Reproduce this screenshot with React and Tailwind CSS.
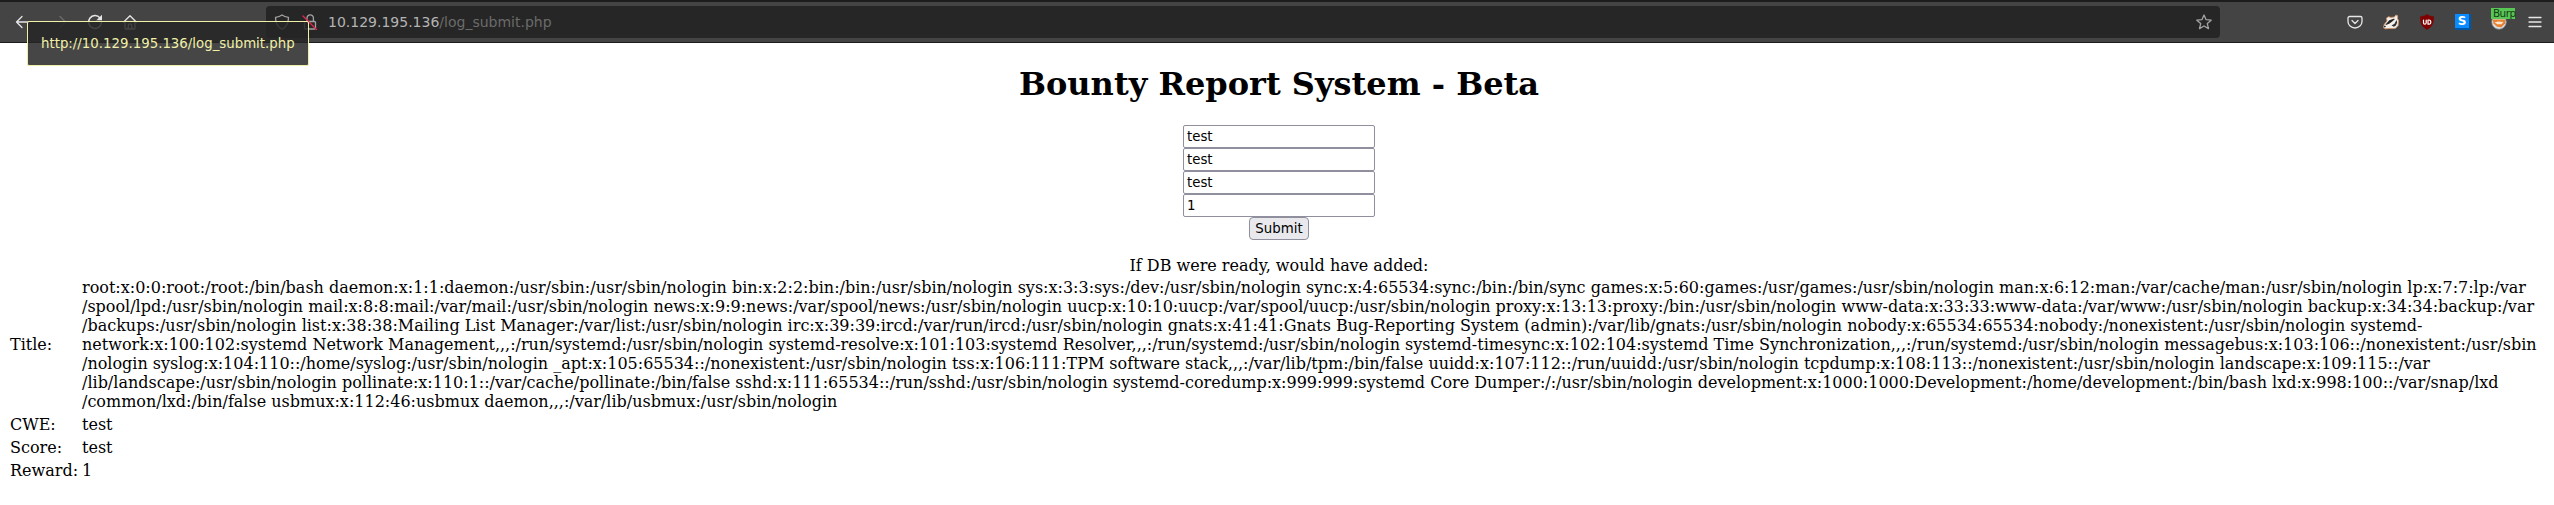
const lines = [
  'root:x:0:0:root:/root:/bin/bash daemon:x:1:1:daemon:/usr/sbin:/usr/sbin/nologin bin:x:2:2:bin:/bin:/usr/sbin/nologin sys:x:3:3:sys:/dev:/usr/sbin/nologin sync:x:4:65534:sync:/bin:/bin/sync games:x:5:60:games:/usr/games:/usr/sbin/nologin man:x:6:12:man:/var/cache/man:/usr/sbin/nologin lp:x:7:7:lp:/var',
  '/spool/lpd:/usr/sbin/nologin mail:x:8:8:mail:/var/mail:/usr/sbin/nologin news:x:9:9:news:/var/spool/news:/usr/sbin/nologin uucp:x:10:10:uucp:/var/spool/uucp:/usr/sbin/nologin proxy:x:13:13:proxy:/bin:/usr/sbin/nologin www-data:x:33:33:www-data:/var/www:/usr/sbin/nologin backup:x:34:34:backup:/var',
  '/backups:/usr/sbin/nologin list:x:38:38:Mailing List Manager:/var/list:/usr/sbin/nologin irc:x:39:39:ircd:/var/run/ircd:/usr/sbin/nologin gnats:x:41:41:Gnats Bug-Reporting System (admin):/var/lib/gnats:/usr/sbin/nologin nobody:x:65534:65534:nobody:/nonexistent:/usr/sbin/nologin systemd-',
  'network:x:100:102:systemd Network Management,,,:/run/systemd:/usr/sbin/nologin systemd-resolve:x:101:103:systemd Resolver,,,:/run/systemd:/usr/sbin/nologin systemd-timesync:x:102:104:systemd Time Synchronization,,,:/run/systemd:/usr/sbin/nologin messagebus:x:103:106::/nonexistent:/usr/sbin',
  '/nologin syslog:x:104:110::/home/syslog:/usr/sbin/nologin _apt:x:105:65534::/nonexistent:/usr/sbin/nologin tss:x:106:111:TPM software stack,,,:/var/lib/tpm:/bin/false uuidd:x:107:112::/run/uuidd:/usr/sbin/nologin tcpdump:x:108:113::/nonexistent:/usr/sbin/nologin landscape:x:109:115::/var',
  '/lib/landscape:/usr/sbin/nologin pollinate:x:110:1::/var/cache/pollinate:/bin/false sshd:x:111:65534::/run/sshd:/usr/sbin/nologin systemd-coredump:x:999:999:systemd Core Dumper:/:/usr/sbin/nologin development:x:1000:1000:Development:/home/development:/bin/bash lxd:x:998:100::/var/snap/lxd',
  '/common/lxd:/bin/false usbmux:x:112:46:usbmux daemon,,,:/var/lib/usbmux:/usr/sbin/nologin',
];

const rows = [
  ['CWE:', 'test'],
  ['Score:', 'test'],
  ['Reward:', '1'],
];

function Icon({ className = '', children }) {
  return (
    <svg
      className={`block h-4 w-4 shrink-0 ${className}`}
      viewBox="0 0 16 16"
      fill="none"
      stroke="currentColor"
      strokeWidth="1.3"
      strokeLinecap="round"
      strokeLinejoin="round"
    >
      {children}
    </svg>
  );
}

function Toolbar() {
  return (
    <header className="flex h-[43px] items-center border-t-2 border-b border-t-[#1d1d1d] border-b-[#1c1c1c] bg-[#444444] pl-[15px] text-[#e6e6e6]">
      <Icon className="mr-[23px]">
        <path d="M13 8H1.500M7 2.500 1.500 8 7 13.500" />
      </Icon>
      <Icon className="mr-[17px] text-[#6b6b6b]">
        <path d="M.5 8h11M6 2.500 11.500 8 6 13.500" />
      </Icon>
      <Icon className="mr-[19px]">
        <path d="M13 4A6.400 6.400 0 1 0 14.400 8.500" strokeWidth="1.500" />
        <path d="M15 .8v5.400H9.400z" fill="currentColor" stroke="none" />
      </Icon>
      <Icon>
        <path d="M1.500 8.300 8 1.800l6.500 6.500M3 7.500v6.500a1 1 0 0 0 1 1h8a1 1 0 0 0 1-1V7.500M6.300 15v-3.500a1.700 1.700 0 0 1 3.400 0V15" />
      </Icon>
      <div className="ml-[128px] flex h-8 w-[1954px] shrink-0 items-center rounded bg-[#262626] pl-2 pr-[8px]">
        <Icon className="text-[#a3a3a3]">
          <path d="M8 1c2 1.500 4 2 6.500 2.300C14.500 9 13 13 8 15.200 3 13 1.500 9 1.500 3.300 4 3 6 2.500 8 1z" />
        </Icon>
        <Icon className="ml-[12px] text-[#a3a3a3]">
          <path d="M5 7V4a3.200 3.200 0 0 1 6.400 0v3M5 7.500h7.500a1 1 0 0 1 1 1V14a1 1 0 0 1-1 1h-9a1 1 0 0 1-1-1V8.500" />
          <path d="M1 2l13.500 13.500" stroke="#e22850" />
        </Icon>
        <span className="ml-[10px] whitespace-pre font-['DejaVu_Sans',sans-serif] text-[14px] leading-5 text-[#b4b4b4]">
          10.129.195.136<span className="text-[#6b6b6b]">/log_submit.php</span>
        </span>
        <Icon className="ml-auto text-[#a3a3a3]">
          <path d="m8 1 2.100 4.700 5.100.5-3.900 3.400 1.200 5L8 12l-4.500 2.600 1.200-5L.8 6.200l5.100-.5z" />
        </Icon>
      </div>
      <Icon className="ml-[127px]">
        <path d="M2.500 2.500h11a1.500 1.500 0 0 1 1.500 1.500v3.500a7 6.500 0 0 1-14 0V4a1.500 1.500 0 0 1 1.500-1.500zM5 6.500l3 3 3-3" />
      </Icon>
      <Icon className="ml-[20px]">
        <path
          d="M.6 13.400 1.200 10.500 4 7 3.500 4 5.500 2.800 8 3.400l3.500-.4 1.300-2 1.900.7-.2 2.600 1 2.500-.4 4.700-2.400 2.700-3 .4-3.500-.2-3.500.4z"
          fill="#f4f1ec"
          stroke="#d39468"
          strokeWidth=".9"
        />
        <path d="M2.500 10.500 6.300 6.300l4.200-1.600 1.500.3-2.500 2.300-3.300 2.400-3.400 1.400z" fill="#222" stroke="none" />
        <path d="m8.500 11.500 3-1.800 2-3.700.7 2.500-1.300 3-2 1.200z" fill="#333" stroke="none" />
        <path d="M.8 12.800 2 11.500l.9 1-1.100.9z" fill="#111" stroke="none" />
      </Icon>
      <Icon className="ml-[20px]">
        <path d="M8 .5c2 1.400 4 2 6.500 2 .3 6.500-1 10-6.500 13-5.500-3-6.800-6.500-6.500-13 2.500 0 4.500-.6 6.500-2z" fill="#800000" stroke="#800000" strokeWidth=".5" />
        <path d="M4.500 6v2.700q0 1.500 1.300 1.500T7.200 8.700V6M9 6h1q1.800 0 1.800 2.100T10 10.200H9z" stroke="#fff" strokeWidth="1.200" />
      </Icon>
      <div className="ml-[20px] h-4 w-4 shrink-0 bg-[#0057a5] pr-[2px] pb-[2px]">
        <div className="h-full bg-[#0a8cff] text-center font-['DejaVu_Sans',sans-serif] text-[12px] leading-[14px] font-bold text-white">S</div>
      </div>
      <div className="relative ml-[20px] h-4 w-4 shrink-0">
        <Icon>
          <circle cx="8" cy="8" r="7.300" fill="#d9dcdf" stroke="#7b8288" strokeWidth=".8" />
          <path d="M1.800 5.500 14.200 5.500 14 9.500 10.500 13.200 6 12.800 2.500 9.500z" fill="#e8802f" stroke="none" />
          <path d="M3.500 8.500 7 7.500l5.500.5-2 2.300H6.500z" fill="#fbe6cf" stroke="none" />
        </Icon>
        <div className="absolute -top-[6px] left-0 h-[11px] w-6 bg-[#57c655] pl-[2px] font-['DejaVu_Sans',sans-serif] text-[10.5px] leading-[10px] tracking-[-0.6px] text-[#173d17]">Burp</div>
      </div>
      <Icon className="ml-[20px]">
        <path d="M2 3.500h12M2 8h12M2 12.500h12" />
      </Icon>
    </header>
  );
}

function Tooltip() {
  return (
    <div className="absolute top-[21px] left-[27px] h-[45px] w-[282px] rounded-[2px] border border-[#f0f0a8] bg-[#262626]/85 pl-[13px] font-['DejaVu_Sans',sans-serif] text-[13.33px] leading-[43px] text-[#f0f0a8]">
      http://10.129.195.136/log_submit.php
    </div>
  );
}

export default function App() {
  return (
    <div className="relative h-[505px] w-[2554px] overflow-hidden bg-white font-['DejaVu_Serif',serif] text-[16px] leading-[19px] text-black">
      <Toolbar />
      <main className="-ml-px w-[2560px] px-2 pt-[23px]">
        <h1 className="text-center text-[32px] leading-[37px] font-bold">Bounty Report System - Beta</h1>
        <form className="mt-[22px] flex flex-col items-center font-['DejaVu_Sans',sans-serif] text-[13.33px]" onSubmit={(e) => e.preventDefault()}>
          {['test', 'test', 'test', '1'].map((value, i) => (
            <input key={i} defaultValue={value} className="block h-[23px] w-[192px] rounded-[2px] border border-[#8f8f9d] bg-white px-[3px] leading-[17px]" />
          ))}
          <button className="h-[23px] w-[60px] rounded-[4px] border border-[#8f8f9d] bg-[#e9e9ed] leading-[20px]">Submit</button>
        </form>
        <p className="mt-4 text-center">If DB were ready, would have added:</p>
        <dl className="mt-[3px] grid grid-cols-[72px_1fr] gap-y-1 pl-[3px]">
          <dt className="self-center">Title:</dt>
          <dd className="whitespace-pre">
            {lines.map((line) => (
              <div key={line}>{line}</div>
            ))}
          </dd>
          {rows.map(([label, value]) => (
            <div key={label} className="contents">
              <dt>{label}</dt>
              <dd>{value}</dd>
            </div>
          ))}
        </dl>
      </main>
      <Tooltip />
    </div>
  );
}
